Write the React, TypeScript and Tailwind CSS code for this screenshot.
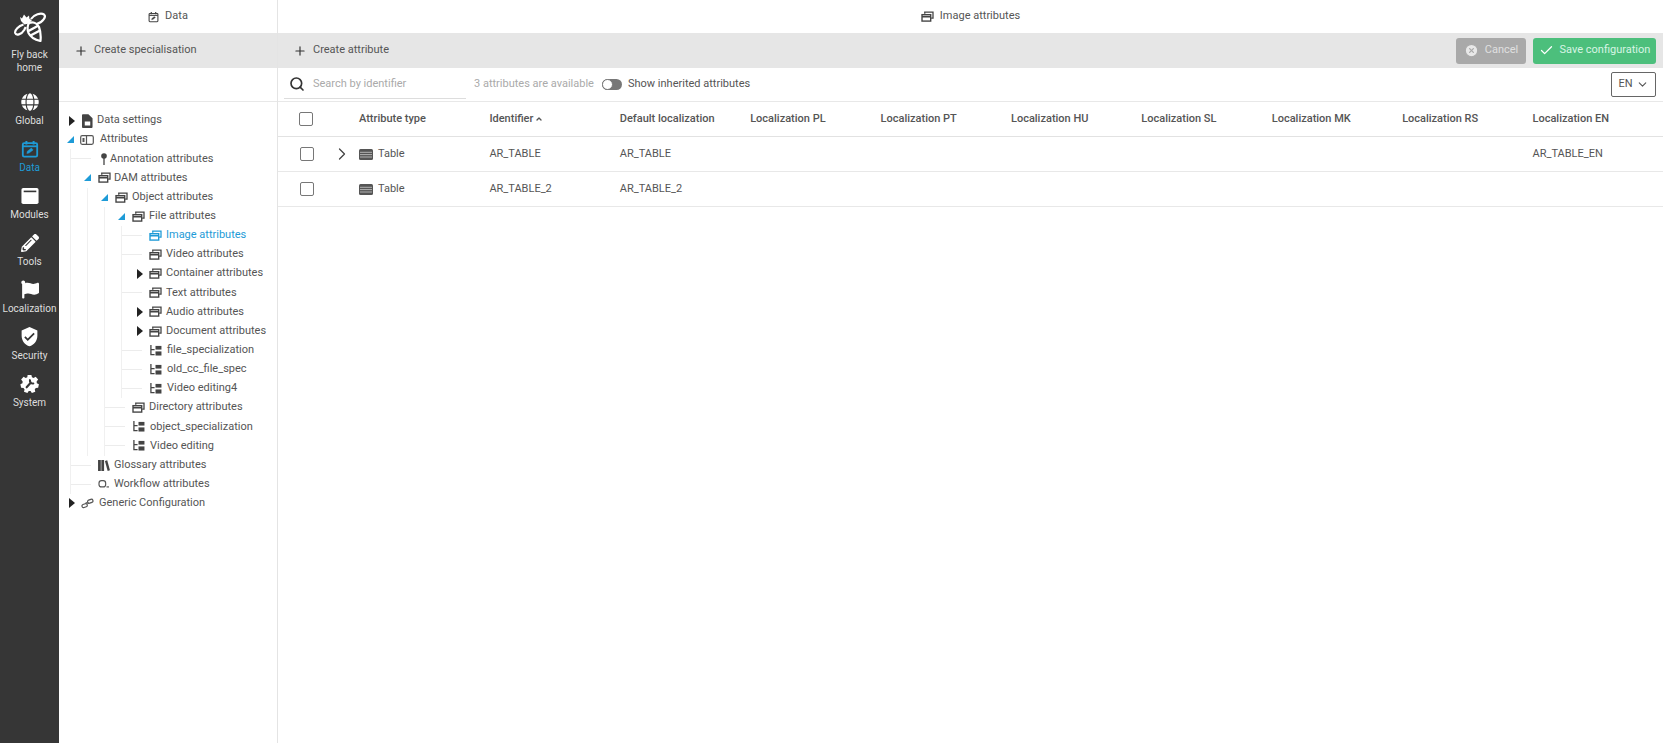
import React from 'react';
import { Plus, Search, Check, ChevronRight, ChevronDown, CircleX, ChevronUp } from 'lucide-react';
import { FaGlobe, FaPencilAlt, FaFlag } from 'react-icons/fa';
import { MdVerifiedUser } from 'react-icons/md';

const BeeLogo = () => (
  <svg viewBox="0 0 32 32" className="w-[32px] h-[32px]" fill="none" stroke="white" strokeWidth="2.200" strokeLinejoin="round">
    <path d="M6 7 8 8.500 10 4.500 12.500 7.500 15 5.500 15.500 9 18 10 15 13.500 10.500 14.500 7 11z" fill="white" stroke="none" />
    <path d="M17 9c3-4.500 10-6.500 13-4.500 2.500 2-1 8-7.500 9.500" />
    <path d="M9.500 14.500c-5 1.500-9 5.500-8.300 8.500.8 2.800 6 2 9-3l1.500-3" />
    <path d="M15 13c4-1.500 8 0 10 4 1.500 4 2 9 1.500 14-5-1-10-4-12-8-1.500-3.500-1-8 .5-10z" />
    <path d="M14.500 21 24.500 15.500M16.500 25.500 26 20.500" strokeWidth="2.500" />
  </svg>
);

const CalendarIcon = () => (
  <svg viewBox="0 0 20 20" className="w-full h-full" fill="none" stroke="currentColor">
    <rect x="2" y="3.500" width="16" height="15" rx="1.500" strokeWidth="2" />
    <path d="M2 7h16" strokeWidth="2" />
    <path d="M6 1v4M14 1v4" strokeWidth="2.200" />
    <path d="M6.500 15l.5-2.500 4.500-3.500 2 2-4.500 3.500z" fill="currentColor" strokeWidth="0.500" />
  </svg>
);

const WindowIcon = () => (
  <svg viewBox="0 0 20 20" className="w-[18px] h-[18px]">
    <rect x="0.500" y="1" width="19" height="18" rx="2" fill="white" />
    <rect x="3" y="4" width="14" height="1.800" fill="#363636" />
  </svg>
);

const GearIcon = () => (
  <svg viewBox="0 0 20 20" className="w-[19px] h-[19px]">
    <path fill="white" d="M8 1h4l.6 2.500 1.700.7 2.200-1.300 2.600 3-1.600 2 .2 1.800 2.200 1.100-.8 3.800-2.500.1-1.100 1.500.6 2.500-3.600 1.300-1.400-2.100H9.200l-1.400 2.100-3.600-1.300.6-2.500-1.100-1.500-2.500-.1-.8-3.800 2.200-1.100.2-1.800-1.600-2 2.600-3 2.200 1.300 1.700-.7z" />
    <path stroke="#363636" strokeWidth="2.200" strokeLinecap="round" d="M7 14l4-4.500M10.500 6.500a3 3 0 0 0 3.500 3.500" fill="none" />
  </svg>
);

// two stacked windows, the icon of the attribute groups
const StackIcon = ({ className = 'text-[#444]' }: { className?: string }) => (
  <svg viewBox="0 0 14 12" className={`w-[13px] h-[11px] shrink-0 ${className}`} fill="none" stroke="currentColor">
    <path d="M4 3V1.200h9v6.600h-2" strokeWidth="1.400" />
    <rect x="1" y="4" width="9.500" height="7" strokeWidth="1.500" />
    <path d="M1 6.200h9.500" strokeWidth="1.800" />
  </svg>
);

const DocIcon = () => (
  <svg viewBox="0 0 12 15" className="w-[11px] h-[14px] shrink-0">
    <path fill="#444" fillRule="evenodd" d="M1 0h6l4.500 4.500V14a1 1 0 0 1-1 1H1a1 1 0 0 1-1-1V1a1 1 0 0 1 1-1zM3 8v4.500h6V8z" />
  </svg>
);

const SlotIcon = () => (
  <svg viewBox="0 0 14 10" className="w-[14px] h-[10px] shrink-0" fill="none" stroke="#555" strokeWidth="1.200">
    <rect x="0.700" y="0.700" width="12.600" height="8.600" rx="1.500" />
    <path d="M6.500 1v8" />
    <rect x="2.500" y="3" width="2" height="4" fill="#555" stroke="none" />
  </svg>
);

const PinIcon = () => (
  <svg viewBox="0 0 6 12" className="w-[6px] h-[12px] shrink-0">
    <circle cx="3" cy="3" r="2.800" fill="#444" />
    <path d="M3 5v7" stroke="#444" strokeWidth="1.300" />
  </svg>
);

const SpecIcon = () => (
  <svg viewBox="0 0 14 12" className="w-[13px] h-[11px] shrink-0" fill="none" stroke="#444">
    <path d="M2 0v10.500h4M2 5h4" strokeWidth="1.400" />
    <rect x="7" y="1" width="6.500" height="4" fill="#444" stroke="none" />
    <rect x="7" y="7" width="6.500" height="4.500" fill="#444" stroke="none" />
  </svg>
);

const BooksIcon = () => (
  <svg viewBox="0 0 13 12" className="w-[12px] h-[11px] shrink-0" fill="#444">
    <rect x="0" y="0" width="3" height="12" />
    <rect x="3.600" y="0" width="3" height="12" />
    <path d="M7.500 1l2.500-.8 3 11-2.500.8z" />
  </svg>
);

const FlowIcon = () => (
  <svg viewBox="0 0 14 12" className="w-[12px] h-[10px] shrink-0" fill="none" stroke="#555" strokeWidth="1.400">
    <rect x="1" y="2" width="8" height="7.500" rx="3" />
    <path d="M10 9.500h3" />
  </svg>
);

const LinkIcon = () => (
  <svg viewBox="0 0 14 12" className="w-[13px] h-[11px] shrink-0" fill="none" stroke="#555" strokeWidth="1.300">
    <rect x="0.800" y="6.500" width="6" height="3.500" rx="1.700" transform="rotate(-20 4 8)" />
    <rect x="7" y="1.800" width="6" height="3.500" rx="1.700" transform="rotate(-20 10 3.500)" />
    <path d="M5 5l4 1" />
  </svg>
);

const TableIcon = () => (
  <svg viewBox="0 0 14 11" className="w-[14px] h-[11px] shrink-0">
    <rect width="14" height="11" rx="1.500" fill="#555" />
    <path d="M1 3.300h12M1 5.600h12M1 8h12" stroke="#ddd" strokeWidth="0.700" />
  </svg>
);

const menu: { label: string; icon: React.ReactNode; active?: boolean }[] = [
  { label: 'Global', icon: <FaGlobe className="w-[18px] h-[18px] text-white" /> },
  { label: 'Data', icon: <div className="w-[18px] h-[20px]"><CalendarIcon /></div>, active: true },
  { label: 'Modules', icon: <WindowIcon /> },
  { label: 'Tools', icon: <FaPencilAlt className="w-[18px] h-[18px] text-white" /> },
  { label: 'Localization', icon: <FaFlag className="w-[18px] h-[19px] text-white" /> },
  { label: 'Security', icon: <MdVerifiedUser className="w-[21px] h-[21px] text-white" /> },
  { label: 'System', icon: <GearIcon /> },
];

const Sidebar = () => (
  <aside className="w-[59px] shrink-0 bg-[#363636] flex flex-col items-center text-[#dedede] text-[10px] leading-[13px]">
    <div className="pt-[10px] flex flex-col items-center h-[80px]">
      <BeeLogo />
      <div className="mt-[6px] text-center">Fly back<br />home</div>
    </div>
    <div className="mt-[11px] flex flex-col gap-[11px] w-full">
      {menu.map((m) => (
        <div key={m.label} className={`flex flex-col items-center h-[36px] ${m.active ? 'text-[#1e9bd7]' : ''}`}>
          <div className="h-[21px] flex items-center justify-center">{m.icon}</div>
          <div className="mt-[2px]">{m.label}</div>
        </div>
      ))}
    </div>
  </aside>
);

type Node = {
  label: string;
  icon: React.ReactNode;
  state?: 'open' | 'closed';
  active?: boolean;
  gap?: string;
  children?: Node[];
};

const stack = <StackIcon />;
const spec = <SpecIcon />;

const tree: Node[] = [
  { label: 'Data settings', icon: <DocIcon />, state: 'closed', gap: 'ml-0' },
  {
    label: 'Attributes', icon: <SlotIcon />, state: 'open', gap: 'ml-[3px]', children: [
      { label: 'Annotation attributes', icon: <PinIcon />, gap: 'ml-[-4px]' },
      {
        label: 'DAM attributes', icon: stack, state: 'open', gap: 'ml-0', children: [
          {
            label: 'Object attributes', icon: stack, state: 'open', children: [
              {
                label: 'File attributes', icon: stack, state: 'open', children: [
                  { label: 'Image attributes', icon: <StackIcon className="text-[#1e9bd7]" />, active: true },
                  { label: 'Video attributes', icon: stack },
                  { label: 'Container attributes', icon: stack, state: 'closed' },
                  { label: 'Text attributes', icon: stack },
                  { label: 'Audio attributes', icon: stack, state: 'closed' },
                  { label: 'Document attributes', icon: stack, state: 'closed' },
                  { label: 'file_specialization', icon: spec, gap: 'ml-[2px]' },
                  { label: 'old_cc_file_spec', icon: spec, gap: 'ml-[2px]' },
                  { label: 'Video editing4', icon: spec, gap: 'ml-[2px]' },
                ],
              },
              { label: 'Directory attributes', icon: stack },
              { label: 'object_specialization', icon: spec, gap: 'ml-[2px]' },
              { label: 'Video editing', icon: spec, gap: 'ml-[2px]' },
            ],
          },
        ],
      },
      { label: 'Glossary attributes', icon: <BooksIcon />, gap: 'ml-0' },
      { label: 'Workflow attributes', icon: <FlowIcon />, gap: 'ml-0' },
    ],
  },
  { label: 'Generic Configuration', icon: <LinkIcon />, state: 'closed', gap: 'ml-[2px]' },
];

const TreeNode = ({ node, nested }: { node: Node; nested?: boolean }) => (
  <div>
    <div className="flex items-center h-[19.150px] text-[11px]">
      <div className="w-[14px] shrink-0 flex justify-center items-center relative">
        {nested && !node.state && <div className="absolute left-[-9px] w-[20px] h-px bg-[#ececec]" />}
        {node.state === 'closed' && (
          <svg viewBox="0 0 6 10" className="w-[6px] h-[10px] ml-[4px]"><path d="M0 0l6 5-6 5z" fill="#222" /></svg>
        )}
        {node.state === 'open' && (
          <svg viewBox="0 0 8 8" className="w-[7px] h-[7px]"><path d="M8 0v8H0z" fill="#1e9bd7" /></svg>
        )}
      </div>
      <div className="w-[20px] shrink-0 flex justify-center">{node.icon}</div>
      <span className={`${node.gap ?? 'ml-px'} whitespace-nowrap ${node.active ? 'text-[#1e9bd7]' : 'text-[#555]'}`}>{node.label}</span>
    </div>
    {node.children && (
      <div className="ml-[7px] pl-[9px] border-l border-[#f0f0f0]">
        {node.children.map((c) => <TreeNode key={c.label} node={c} nested />)}
      </div>
    )}
  </div>
);

const columns = ['Default localization', 'Localization PL', 'Localization PT', 'Localization HU', 'Localization SL', 'Localization MK', 'Localization RS', 'Localization EN'];

const Box = () => <div className="w-[14px] h-[14px] border-[1.500px] border-[#777] rounded-[2px] bg-white" />;

const rows = [
  { id: 'AR_TABLE', expand: true, en: 'AR_TABLE_EN' },
  { id: 'AR_TABLE_2', expand: false, en: '' },
];

const gridCols = 'grid grid-cols-[81px_repeat(10,130.400px)] items-center';

export default function App() {
  return (
    <div className="flex h-[743px] w-[1663px] overflow-hidden bg-white text-[#555] font-['Roboto',Arial,sans-serif]">
      <Sidebar />

      {/* Panel de l'arbre */}
      <div className="w-[219px] shrink-0 border-r border-[#e4e4e4] flex flex-col">
        <div className="h-[33px] flex items-center justify-center gap-[6px] text-[11px]">
          <div className="w-[11px] h-[12px] text-[#444]"><CalendarIcon /></div>
          <span>Data</span>
        </div>
        <div className="h-[35px] bg-[#e6e6e6] flex items-center pl-[15px] text-[11px]">
          <Plus className="w-[14px] h-[14px] text-[#333] mr-[6px]" />
          <span>Create specialisation</span>
        </div>
        <div className="h-[34px] border-b border-[#e8e8e8]" />
        <div className="pt-[9px] pl-[4px]">
          {tree.map((n) => <TreeNode key={n.label} node={n} />)}
        </div>
      </div>

      {/* Zone principale */}
      <div className="flex-1 min-w-0 flex flex-col">
        <div className="h-[33px] flex items-center justify-center gap-[6px] text-[11px]">
          <StackIcon />
          <span>Image attributes</span>
        </div>
        <div className="h-[35px] bg-[#e6e6e6] flex items-center pl-[15px] pr-[7px] text-[11px]">
          <Plus className="w-[14px] h-[14px] text-[#333] mr-[6px]" />
          <span>Create attribute</span>
          <div className="ml-auto flex gap-[7px]">
            <button className="w-[70px] h-[26px] bg-[#a9a9a9] rounded-[3px] text-[#e0e0e0] flex items-center justify-center gap-[6px]">
              <CircleX className="w-[15px] h-[15px] fill-[#e8e8e8] text-[#a9a9a9]" />
              Cancel
            </button>
            <button className="w-[123px] h-[26px] bg-[#4cbf7c] rounded-[3px] text-[#d8f5e4] flex items-center justify-center gap-[6px]">
              <Check className="w-[15px] h-[15px] text-white" />
              Save configuration
            </button>
          </div>
        </div>
        <div className="h-[34px] border-b border-[#e8e8e8] flex items-center pl-[6px] pr-[7px] text-[11px]">
          <div className="w-[182px] h-[28px] border-b border-[#ddd] flex items-center">
            <Search className="w-[16px] h-[16px] text-[#333] ml-[5px] mr-[8px]" strokeWidth={2.500} />
            <span className="text-[#aaa]">Search by identifier</span>
          </div>
          <span className="ml-[8px] text-[#aaa] w-[128px]">3 attributes are available</span>
          <div className="w-[20px] h-[11px] rounded-full bg-[#777] relative mr-[6px]">
            <div className="absolute left-0 top-0 w-[11px] h-[11px] rounded-full bg-white border border-[#777]" />
          </div>
          <span>Show inherited attributes</span>
          <div className="ml-auto w-[45px] h-[25px] border border-[#666] rounded-[2px] flex items-center justify-center gap-[3px]">
            EN <ChevronDown className="w-[13px] h-[13px]" />
          </div>
        </div>

        <div className={`${gridCols} h-[35px] border-b border-[#e2e2e2] text-[11px] font-medium text-[#555]`}>
          <div className="pl-[21px]"><Box /></div>
          <div>Attribute type</div>
          <div className="flex items-center gap-[2px]">Identifier <ChevronUp className="w-[8px] h-[8px]" strokeWidth={4} /></div>
          {columns.map((c) => <div key={c}>{c}</div>)}
        </div>
        {rows.map((r) => (
          <div key={r.id} className={`${gridCols} h-[35px] border-b border-[#e8e8e8] text-[11px]`}>
            <div className="pl-[22px] flex items-center">
              <Box />
              {r.expand && <ChevronRight className="w-[20px] h-[20px] ml-[18px] text-[#444]" strokeWidth={1.500} />}
            </div>
            <div className="flex items-center gap-[5px]"><TableIcon />Table</div>
            <div>{r.id}</div>
            <div>{r.id}</div>
            <div /><div /><div /><div /><div /><div />
            <div>{r.en}</div>
          </div>
        ))}
      </div>
    </div>
  );
}
